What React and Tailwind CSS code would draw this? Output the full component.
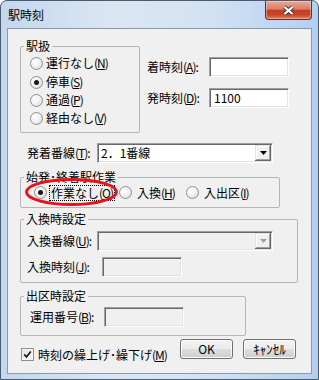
import React from 'react';

const font = "font-['Noto_Sans_CJK_JP','Noto_Sans_CJK_SC',sans-serif]";

// access key in parentheses, narrowed like MS UI Gothic's half-width letters
const Key = ({ k }) => (
    <span className="tracking-[-1px]">
        (<u>{k}</u>)
    </span>
);

const Radio = ({ checked }) => (
    <span className="flex h-[13px] w-[13px] shrink-0 items-center justify-center rounded-full border border-[#8e8f8f] bg-[radial-gradient(circle_at_35%_35%,#ffffff_0%,#f2f2f2_45%,#d2d2d2_100%)]">
        {checked && <span className="h-[5px] w-[5px] rounded-full bg-[#1a1a1a]" />}
    </span>
);

const Edit = ({ value, disabled }) => (
    <div
        className={`h-[20px] w-[80px] shrink-0 border border-t-[#a0a0a0] border-l-[#a0a0a0] border-b-white border-r-white pl-[4px] text-[12px] leading-[18px] shadow-[inset_1px_1px_0_#696969,inset_-1px_-1px_0_#e3e3e3] ${disabled ? 'bg-[#f0f0f0]' : 'bg-white'}`}
    >
        {value}
    </div>
);

const Combo = ({ value, disabled }) => (
    <div
        className={`flex h-[20px] w-[176px] shrink-0 items-center border border-t-[#a0a0a0] border-l-[#a0a0a0] border-b-white border-r-white p-[1px] shadow-[inset_1px_1px_0_#696969,inset_-1px_-1px_0_#e3e3e3] ${disabled ? 'bg-[#f0f0f0]' : 'bg-white'}`}
    >
        <span className="flex-1 pl-[2px] text-[12px] leading-[16px]">{value}</span>
        <span className="flex h-[16px] w-[16px] items-center justify-center bg-[#f0f0f0] shadow-[inset_-1px_-1px_0_#696969,inset_1px_1px_0_#e3e3e3,inset_-2px_-2px_0_#a0a0a0,inset_2px_2px_0_#ffffff]">
            <svg width="7" height="4" viewBox="0 0 7 4">
                <path d="M0 0h7L3.5 4z" fill={disabled ? '#a0a0a0' : '#000000'} />
            </svg>
        </span>
    </div>
);

const Group = ({ label, className, children }) => (
    <div className={`shrink-0 rounded-[2px] border border-[#b5b5b5] ${className}`}>
        <div className="-mb-[5px] -mt-[7px] ml-[3px] w-fit whitespace-nowrap bg-[#f0f0f0] px-[2px] text-[12px] leading-[12px]">
            {label}
        </div>
        {children}
    </div>
);

const Button = ({ children }) => (
    <div className="flex h-[20px] w-[53px] items-center justify-center whitespace-nowrap rounded-[3px] border border-[#707070] bg-[linear-gradient(180deg,#f2f2f2_0%,#ebebeb_50%,#dddddd_51%,#cfcfcf_100%)] text-[12px] leading-[12px] shadow-[inset_0_0_0_1px_#fbfbfb]">
        {children}
    </div>
);

export default function App() {
    const stops = [
        { label: '運行なし', key: 'N' },
        { label: '停車', key: 'S', checked: true },
        { label: '通過', key: 'P' },
        { label: '経由なし', key: 'V' },
    ];

    return (
        <div
            className={`flex h-[380px] w-[319px] flex-col overflow-hidden rounded-t-[7px] border border-[#4b5a6c] bg-[linear-gradient(90deg,#c3d7ee_0%,#dbe6f2_35%,#d3e2f2_65%,#b3cff0_100%)] ${font} text-[12px] text-black`}
        >
            {/* title bar */}
            <div className="flex h-[27px] shrink-0 items-start">
                <div className="pl-[7px] pt-[7px] text-[12px] leading-[14px]">駅時刻</div>
                <div className="ml-auto mr-[6px] flex h-[19px] w-[47px] items-center justify-center rounded-b-[4px] border border-t-0 border-[#6a2e24] bg-[linear-gradient(180deg,#eaa99a_0%,#dc7c67_45%,#c53e22_52%,#c8432a_75%,#e0805c_100%)] shadow-[inset_0_0_0_1px_rgba(255,255,255,0.35)]">
                    <svg width="13" height="11" viewBox="0 0 13 11">
                        <path d="M2.5 2l8 7M10.5 2l-8 7" stroke="#3c3c3c" strokeWidth="4.2" />
                        <path d="M2.5 2l8 7M10.5 2l-8 7" stroke="#ffffff" strokeWidth="2.3" />
                    </svg>
                </div>
            </div>

            {/* client area */}
            <div className="mx-[6px] h-[346px] shrink-0 border border-[#8a9aae] bg-[#f0f0f0] pl-[12px]">
                <div className="mt-[17px] flex">
                    <Group label="駅扱" className="h-[87px] w-[120px]">
                        <div className="flex flex-col pl-[9px] pt-[7px]">
                            {stops.map((s, i) => (
                                <div key={s.key} className={`flex h-[18px] items-center ${i === 1 ? 'mt-[1px]' : ''}`}>
                                    <Radio checked={s.checked} />
                                    <span className="ml-[3px] whitespace-nowrap leading-[12px]">
                                        {s.label}
                                        <Key k={s.key} />
                                    </span>
                                </div>
                            ))}
                        </div>
                    </Group>

                    <div className="ml-[7px] mt-[11px]">
                        <div className="flex items-center">
                            <span className="w-[62px] whitespace-nowrap">
                                着時刻<Key k="A" />:
                            </span>
                            <Edit />
                        </div>
                        <div className="mt-[11px] flex items-center">
                            <span className="w-[62px] whitespace-nowrap">
                                発時刻<Key k="D" />:
                            </span>
                            <Edit value="1100" />
                        </div>
                    </div>
                </div>

                <div className="mt-[10px] flex items-center pl-[7px]">
                    <span className="w-[70px] whitespace-nowrap">
                        発着番線<Key k="T" />:
                    </span>
                    <Combo value="2．1番線" />
                </div>

                <Group label="始発･終着駅作業" className="relative mt-[14px] h-[31px] w-[260px]">
                    <div className="flex h-[29px] items-center pl-[13px]">
                        <div className="flex w-[85px] items-center">
                            <Radio checked />
                            <span className="ml-[2px] whitespace-nowrap border border-dotted border-black px-[1px] py-[1px] leading-[12px]">
                                作業なし<Key k="O" />
                            </span>
                        </div>
                        <div className="flex w-[67px] items-center">
                            <Radio />
                            <span className="ml-[5px] whitespace-nowrap leading-[12px]">
                                入換<Key k="H" />
                            </span>
                        </div>
                        <div className="flex items-center">
                            <Radio />
                            <span className="ml-[5px] whitespace-nowrap leading-[12px]">
                                入出区<Key k="I" />
                            </span>
                        </div>
                    </div>
                    <svg className="pointer-events-none absolute -top-[1px] left-[3px] overflow-visible" width="96" height="31" viewBox="0 0 96 31">
                        <ellipse cx="47.5" cy="15" rx="45" ry="12.5" fill="none" stroke="#e8121b" strokeWidth="3" />
                    </svg>
                </Group>

                <Group label="入換時設定" className="mt-[11px] h-[64px] w-[278px]">
                    <div className="pl-[6px] pt-[11px]">
                        <div className="flex items-center">
                            <span className="w-[70px] whitespace-nowrap">
                                入換番線<Key k="U" />:
                            </span>
                            <Combo disabled />
                        </div>
                        <div className="mt-[6px] flex items-center">
                            <span className="w-[75px] whitespace-nowrap">
                                入換時刻<Key k="J" />:
                            </span>
                            <Edit disabled />
                        </div>
                    </div>
                </Group>

                <Group label="出区時設定" className="mt-[13px] h-[40px] w-[226px]">
                    <div className="flex items-center pl-[9px] pt-[10px]">
                        <span className="w-[74px] whitespace-nowrap">
                            運用番号<Key k="B" />:
                        </span>
                        <Edit disabled />
                    </div>
                </Group>

                <div className="mt-[3px] flex items-start">
                    <div className="mt-[9px] flex w-[160px] items-center pl-[1px]">
                        <span className="flex h-[13px] w-[13px] shrink-0 items-center justify-center border border-[#8e8f8f] bg-[linear-gradient(135deg,#dedede,#ffffff)] shadow-[inset_0_0_0_1px_#f4f4f4]">
                            <svg width="9" height="9" viewBox="0 0 9 9">
                                <path d="M1.2 4.3l2.3 2.5L7.8 1.5" stroke="#1f1f1f" strokeWidth="1.8" fill="none" />
                            </svg>
                        </span>
                        <span className="ml-[4px] whitespace-nowrap leading-[13px]">
                            時刻の繰上げ･繰下げ<Key k="M" />
                        </span>
                    </div>
                    <Button>OK</Button>
                    <div className="ml-[10px]">
                        <Button>
                            <span className="text-[13px]">ｷｬﾝｾﾙ</span>
                        </Button>
                    </div>
                </div>
            </div>
        </div>
    );
}
